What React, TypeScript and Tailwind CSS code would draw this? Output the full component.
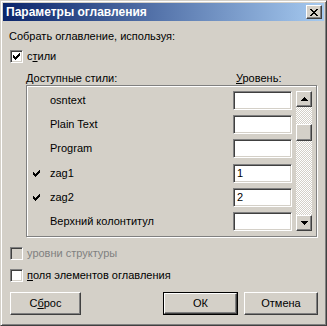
import React from 'react';

const sunken =
    'border border-t-[#808080] border-l-[#808080] border-r-white border-b-white shadow-[inset_1px_1px_0_#404040,inset_-1px_-1px_0_#d4d0c8]';
const raised =
    'border border-t-white border-l-white border-r-[#404040] border-b-[#404040] shadow-[inset_-1px_-1px_0_#808080]';

function Pixels({ rows, w, h }: { rows: string[]; w: number; h: number }) {
    const rects: React.ReactNode[] = [];
    rows.forEach((row, y) => {
        row.split('').forEach((c, x) => {
            if (c === 'X') rects.push(<rect key={`${x}-${y}`} x={x} y={y} width={1} height={1} />);
        });
    });
    return (
        <svg width={w} height={h} viewBox={`0 0 ${w} ${h}`} shapeRendering="crispEdges" fill="#000">
            {rects}
        </svg>
    );
}

const CHECK = ['......X', '.....XX', 'X...XXX', 'XX.XXX.', 'XXXXX..', '.XXX...', '..X....'];
const CLOSE = ['XX....XX', '.XX..XX.', '..XXXX..', '...XX...', '..XXXX..', '.XX..XX.', 'XX....XX'];
const UP = ['...X...', '..XXX..', '.XXXXX.', 'XXXXXXX'];
const DOWN = ['XXXXXXX', '.XXXXX.', '..XXX..', '...X...'];

function CheckBox({ checked, disabled }: { checked?: boolean; disabled?: boolean }) {
    return (
        <div className={`w-[13px] h-[13px] flex items-center justify-center ${sunken} ${disabled ? 'bg-[#d4d0c8]' : 'bg-white'}`}>
            {checked && <Pixels rows={CHECK} w={7} h={7} />}
        </div>
    );
}

const styles = [
    { name: 'osntext', level: '', checked: false },
    { name: 'Plain Text', level: '', checked: false },
    { name: 'Program', level: '', checked: false },
    { name: 'zag1', level: '1', checked: true },
    { name: 'zag2', level: '2', checked: true },
    { name: 'Верхний колонтитул', level: '', checked: false },
];

export default function App() {
    return (
        <div className="w-[327px] h-[326px] bg-[#d4d0c8] border border-t-[#d4d0c8] border-l-[#d4d0c8] border-r-[#404040] border-b-[#404040] shadow-[inset_1px_1px_0_#fff,inset_-1px_-1px_0_#808080] p-[2px] flex flex-col font-['Liberation_Sans',sans-serif] text-[11px] leading-[13px] text-black">
            {/* Title bar */}
            <div className="h-[18px] flex items-center justify-between pl-[3px] pr-[2px] bg-[linear-gradient(to_right,#0a246a,#a6caf0)]">
                <span className="text-white font-bold text-[12px]">Параметры оглавления</span>
                <div className={`w-[16px] h-[14px] bg-[#d4d0c8] flex items-center justify-center ${raised}`}>
                    <Pixels rows={CLOSE} w={8} h={7} />
                </div>
            </div>

            <div className="flex flex-col pl-[6px]">
                <div className="mt-[9px]">Собрать оглавление, используя:</div>

                <div className="mt-[7px] flex items-center gap-[4px] ml-[1px]">
                    <CheckBox checked />
                    <span>с<u>т</u>или</span>
                </div>

                <div className="mt-[9px] ml-[17px] flex w-[291px]">
                    <span className="w-[210px]">Доступные стили:</span>
                    <span><u>У</u>ровень:</span>
                </div>

                {/* Styles list */}
                <div className="ml-[17px] w-[291px] h-[152px] border border-[#808080] shadow-[inset_1px_1px_0_#fff,1px_1px_0_#fff] pt-[5px] flex">
                    <div className="w-[265px] h-[140px] flex flex-col justify-between">
                        {styles.map((s) => (
                            <div key={s.name} className="h-[19px] flex items-center">
                                <div className="w-[23px] pl-[6px] flex items-center">
                                    {s.checked && <Pixels rows={CHECK} w={7} h={7} />}
                                </div>
                                <span className="w-[183px]">{s.name}</span>
                                <div className={`w-[59px] h-[19px] bg-white flex items-center pl-[3px] ${sunken}`}>
                                    {s.level}
                                </div>
                            </div>
                        ))}
                    </div>
                    <div className="ml-[4px] w-[16px] h-[140px] flex flex-col bg-[repeating-conic-gradient(#fff_0_25%,#d4d0c8_0_50%)] bg-[length:2px_2px]">
                        <div className={`w-[16px] h-[16px] bg-[#d4d0c8] flex items-center justify-center ${raised}`}>
                            <Pixels rows={UP} w={7} h={4} />
                        </div>
                        <div className={`mt-[17px] w-[16px] h-[17px] bg-[#d4d0c8] ${raised}`} />
                        <div className={`mt-auto w-[16px] h-[16px] bg-[#d4d0c8] flex items-center justify-center ${raised}`}>
                            <Pixels rows={DOWN} w={7} h={4} />
                        </div>
                    </div>
                </div>

                <div className="mt-[10px] flex items-center gap-[4px] ml-[1px]">
                    <CheckBox disabled />
                    <span className="text-[#808080]">уровни структуры</span>
                </div>

                <div className="mt-[9px] flex items-center gap-[4px] ml-[1px]">
                    <CheckBox />
                    <span><u>п</u>оля элементов оглавления</span>
                </div>

                {/* Buttons */}
                <div className="mt-[10px] flex items-center ml-[1px]">
                    <div className={`w-[71px] h-[23px] bg-[#d4d0c8] flex items-center justify-center ${raised}`}>
                        <span>С<u>б</u>рос</span>
                    </div>
                    <div className="ml-[82px] w-[75px] h-[23px] border border-black">
                        <div className={`w-full h-full bg-[#d4d0c8] flex items-center justify-center ${raised}`}>
                            ОК
                        </div>
                    </div>
                    <div className={`ml-[6px] w-[74px] h-[23px] bg-[#d4d0c8] flex items-center justify-center ${raised}`}>
                        Отмена
                    </div>
                </div>
            </div>
        </div>
    );
}
